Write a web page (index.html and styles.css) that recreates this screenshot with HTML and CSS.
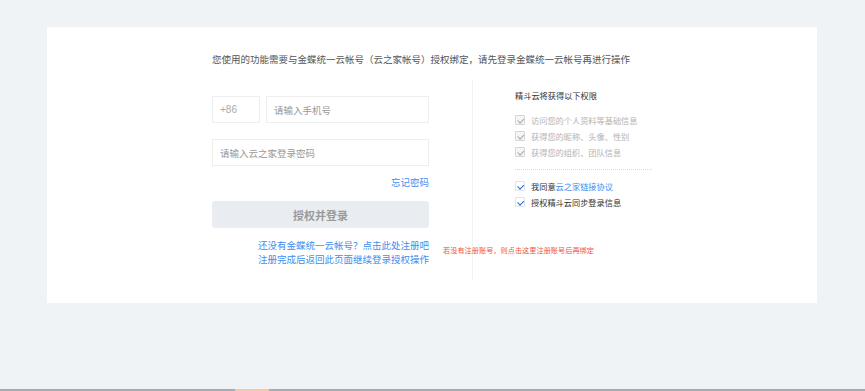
FILE: index.html
```html
<html>
<head>
    <title>授权绑定</title>
    <link rel="stylesheet" href="styles.css">
</head>
<body>
    <div class="page">
        <div class="card">
            <div class="inner">
                <p class="intro">您使用的功能需要与金蝶统一云帐号（云之家帐号）授权绑定，请先登录金蝶统一云帐号再进行操作</p>
                <div class="columns">
                    <div class="login">
                        <div class="phone-row">
                            <div class="area-code">+86</div>
                            <input type="text" class="field phone" placeholder="请输入手机号">
                        </div>
                        <input type="password" class="field password" placeholder="请输入云之家登录密码">
                        <div class="forgot"><a href="#">忘记密码</a></div>
                        <button class="submit">授权并登录</button>
                        <div class="register">
                            <a href="#">还没有金蝶统一云帐号？点击此处注册吧</a><br>
                            <a href="#">注册完成后返回此页面继续登录授权操作</a>
                        </div>
                        <div class="note">若没有注册账号，则点击这里注册账号后再绑定</div>
                    </div>
                    <div class="divider"></div>
                    <div class="perms">
                        <h3>精斗云将获得以下权限</h3>
                        <ul class="perm-list">
                            <li class="perm disabled"><span class="box"></span>访问您的个人资料等基础信息</li>
                            <li class="perm disabled"><span class="box"></span>获得您的昵称、头像、性别</li>
                            <li class="perm disabled"><span class="box"></span>获得您的组织、团队信息</li>
                        </ul>
                        <div class="dots"></div>
                        <ul class="perm-list">
                            <li class="perm checked"><span class="box"></span>我同意<a href="#">云之家链接协议</a></li>
                            <li class="perm checked"><span class="box"></span>授权精斗云同步登录信息</li>
                        </ul>
                    </div>
                </div>
            </div>
        </div>
    </div>
    <div class="bottom-bar"><span class="bar-tab"></span></div>
</body>
</html>
```

FILE: styles.css
```css
body {
    margin: 0;
    background-color: #eff3f6;
    font-family: "Noto Sans CJK SC", "Liberation Sans", sans-serif;
}

.page {
    height: 389px;
    padding: 27px 0 0 47px;
    box-sizing: border-box;
}

.card {
    width: 770px;
    height: 276px;
    background-color: white;
    box-sizing: border-box;
    padding: 25px 0 0 165px;
}

.intro {
    margin: 0;
    font-size: 9.5px;
    line-height: 14px;
    color: #555;
}

.columns {
    display: flex;
    margin-top: 14px;
}

.login {
    position: relative;
    width: 217px;
    padding: 16px 0 14px;
}

.phone-row {
    display: flex;
    gap: 6px;
}

.area-code, .field {
    height: 27px;
    box-sizing: border-box;
    border: 1px solid #eeeeee;
    font-family: inherit;
    font-size: 9.5px;
    color: #999;
    outline: none;
}

.area-code {
    width: 48px;
    padding-left: 7px;
    line-height: 25px;
    font-family: "Liberation Sans", sans-serif;
    font-size: 10px;
    color: #aaa;
}

.field {
    padding: 0 7px;
}

.field::placeholder {
    color: #999;
}

.phone {
    flex: 1;
    min-width: 0;
}

.password {
    display: block;
    width: 100%;
    margin-top: 16px;
}

.forgot {
    margin-top: 9px;
    text-align: right;
    font-size: 9.5px;
    line-height: 14px;
}

a {
    color: #3e8ef0;
    text-decoration: none;
}

.submit {
    display: block;
    width: 100%;
    height: 27px;
    margin-top: 12px;
    border: none;
    border-radius: 3px;
    background-color: #e9edf1;
    color: #9a9a9a;
    font-family: inherit;
    font-size: 11px;
    font-weight: bold;
}

.register {
    margin-top: 10px;
    text-align: right;
    font-size: 9.5px;
    line-height: 14px;
}

.note {
    position: absolute;
    left: 231px;
    top: 165px;
    white-space: nowrap;
    font-size: 7.2px;
    line-height: 10px;
    color: #f5523c;
}

.divider {
    width: 1px;
    margin: 0 42px 0 43px;
    background-color: #f2f2f2;
}

.perms {
    padding-top: 8px;
    width: 137px;
}

.perms h3 {
    margin: 0;
    font-size: 8.2px;
    font-weight: normal;
    line-height: 14px;
    color: #333;
}

.perm-list {
    list-style: none;
    margin: 0;
    padding: 0;
}

.perms h3 + .perm-list {
    margin-top: 10px;
}

.perm {
    display: flex;
    align-items: center;
    height: 16px;
    font-size: 8.2px;
    white-space: nowrap;
    color: #333;
}

.perm.disabled {
    color: #b3b3b3;
}

.box {
    position: relative;
    width: 10px;
    height: 10px;
    margin-right: 6px;
    box-sizing: border-box;
    border: 1px solid #d6d6d6;
    border-radius: 1px;
    background-color: #f5f5f5;
}

.box::after {
    content: "";
    position: absolute;
    left: 2.5px;
    top: 1px;
    width: 2.5px;
    height: 4.5px;
    border: solid #aaa;
    border-width: 0 1.5px 1.5px 0;
    transform: rotate(45deg);
}

.perm.checked .box {
    background-color: white;
    border-color: #e2e2e2;
}

.perm.checked .box::after {
    border-color: #1e6ee6;
}

.dots {
    margin: 9px 0 8px;
    border-top: 1px dotted #d9d9d9;
}

.bottom-bar {
    height: 2px;
    background-color: #a4adb3;
}

.bar-tab {
    display: block;
    width: 34px;
    height: 2px;
    margin-left: 235px;
    background-color: #f2c9a4;
}
```
